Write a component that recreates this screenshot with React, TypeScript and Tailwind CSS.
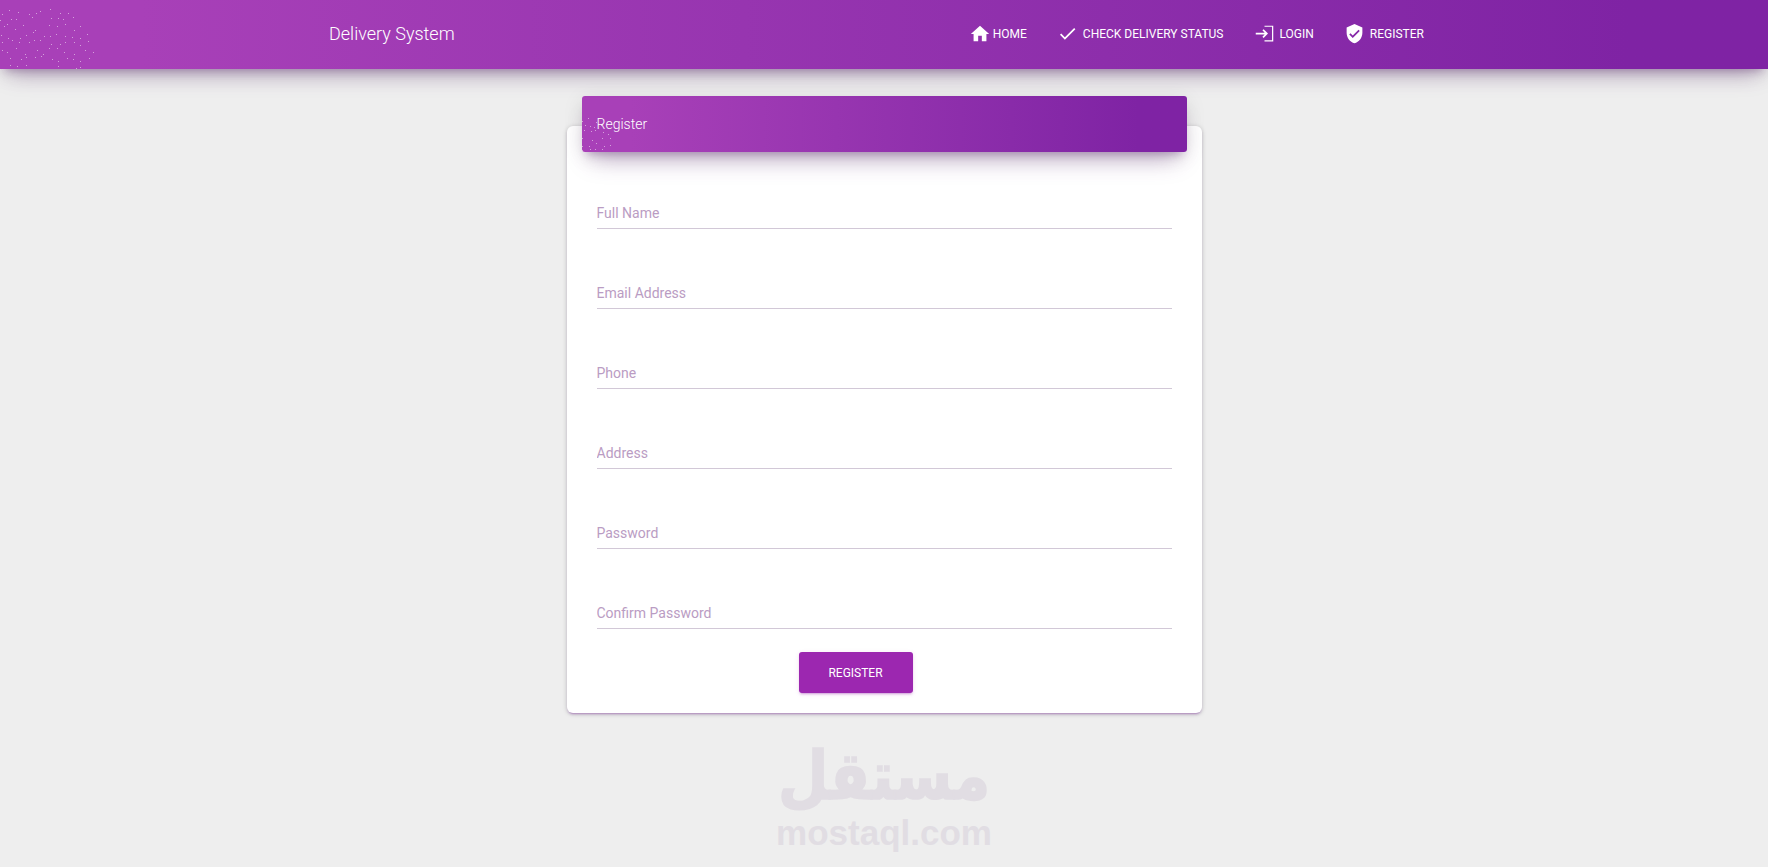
import clsx from "clsx";

const fields = ["Full Name", "Email Address", "Phone", "Address", "Password", "Confirm Password"];

function noise(n: number) {
  const v = Math.sin(n * 12.9898) * 43758.5453;
  return v - Math.floor(v);
}

function makeDots(maxX: number, maxY: number, step: number) {
  // jittered grid, cut to a fan from the bottom left corner
  const dots: { x: number; y: number }[] = [];
  let n = 1;
  for (let y = maxY; y > 3; y -= step) {
    for (let x = 2; x < maxX; x += step) {
      n++;
      const dx = x + (noise(n) - 0.5) * step * 0.8;
      const dy = y + (noise(n + 500) - 0.5) * step * 0.8;
      const rx = dx / maxX;
      const ry = (maxY - dy) / maxY;
      if (rx * rx + ry * ry * 0.7 < 1 && noise(n + 900) > 0.12) dots.push({ x: dx, y: dy });
    }
  }
  return dots;
}

function Dots({ width, height, step }: { width: number; height: number; step: number }) {
  return (
    <svg width={width} height={height} className="absolute left-0 bottom-0">
      {makeDots(width - 2, height - 2, step).map((d, i) => (
        <rect key={i} x={Math.round(d.x)} y={Math.round(d.y)} width="1" height="1" fill="#ffffff" opacity="0.5" />
      ))}
    </svg>
  );
}

function Icon({ d, className }: { d: string; className?: string }) {
  return (
    <svg viewBox="0 0 24 24" fill="currentColor" className={clsx("shrink-0", className)}>
      <path d={d} />
    </svg>
  );
}

const navItems = [
  { name: "Home", gap: "mr-[2px] size-[22px]", d: "M10 20v-6h4v6h5v-8h3L12 3 2 12h3v8z" },
  { name: "Check Delivery Status", gap: "mr-[5px] size-[21px]", d: "M9 16.17 4.83 12l-1.42 1.41L9 19 21 7l-1.41-1.41z" },
  {
    name: "Login",
    gap: "mr-[5px] size-[21px]",
    d: "M11 7 9.6 8.4l2.6 2.6H2v2h10.2l-2.6 2.6L11 17l5-5-5-5zm11-4H12v1.4h8.6v15.2H12V21h10z",
  },
  {
    name: "Register",
    gap: "mr-[5px] size-[21px]",
    d: "M12 1 3 5v6c0 5.55 3.84 10.74 9 12 5.16-1.26 9-6.45 9-12V5l-9-4zm-2 16-4-4 1.41-1.41L10 14.17l6.59-6.59L18 9l-8 8z",
  },
];

export default function App() {
  return (
    <div className="min-h-[867px] overflow-hidden bg-[#eeeeee] font-['Roboto',sans-serif]">
      {/* Navbar */}
      <nav className="relative z-10 flex h-[69px] items-center justify-between bg-gradient-to-r from-[#a840b8] from-[8%] to-[#7f23a4] to-[92%] pb-[2px] pl-[329px] pr-[344px] text-white shadow-[0_14px_22px_-10px_rgba(100,50,120,0.4),0_4px_20px_0_rgba(0,0,0,0.1),0_7px_8px_-5px_rgba(100,50,120,0.3)]">
        <Dots width={100} height={68} step={8} />
        <span className="text-[18px] font-light">Delivery System</span>
        <div className="flex items-center gap-[30px]">
          {navItems.map((item) => (
            <a key={item.name} href="#" className="flex items-center text-[12px] uppercase">
              <Icon d={item.d} className={item.gap} />
              {item.name}
            </a>
          ))}
        </div>
      </nav>

      {/* Register card */}
      <main className="flex flex-col items-center pt-[57px]">
        <div className="w-[635px] rounded-[6px] bg-white px-[30px] pb-[20px] shadow-[0_2px_2px_0_rgba(123,31,162,0.14),0_3px_1px_-2px_rgba(123,31,162,0.2),0_1px_5px_0_rgba(0,0,0,0.2)]">
          <div className="relative -mx-[15px] -mt-[30px] flex h-[56px] items-center overflow-hidden rounded-[3px] bg-gradient-to-r from-[#a840b8] from-[8%] to-[#7f23a4] to-[92%] px-[15px] text-[14px] font-light text-white shadow-[0_16px_24px_-10px_rgba(100,50,120,0.4),0_4px_20px_0_rgba(0,0,0,0.1),0_7px_8px_-5px_rgba(100,50,120,0.3)]">
            <Dots width={32} height={40} step={6} />
            <span className="relative">Register</span>
          </div>

          <form className="flex flex-col gap-[44px] pt-[41px]">
            {fields.map((field) => (
              <input
                key={field}
                placeholder={field}
                className="h-[36px] w-full border-b border-[#d2c8d7] bg-transparent pt-[4px] text-[14px] outline-none placeholder:text-[#ba9cc3]"
              />
            ))}
          </form>

          <div className="pl-[202px] pt-[23px]">
            <button className="h-[41px] w-[114px] rounded-[3px] bg-[#9c27b0] text-[12px] uppercase text-white shadow-[0_2px_2px_0_rgba(156,39,176,0.14),0_3px_1px_-2px_rgba(156,39,176,0.2),0_1px_5px_0_rgba(156,39,176,0.12)]">
              Register
            </button>
          </div>
        </div>

        {/* Watermark */}
        <div className="mt-[32px] flex flex-col items-center text-[#e1dde3]">
          <span
            dir="rtl"
            className="origin-bottom scale-y-115 font-['DejaVu_Sans',sans-serif] text-[58px] font-bold leading-[72px] [-webkit-text-stroke:1.5px_#e1dde3]"
          >
            مستقل
          </span>
          <span className="font-['Liberation_Sans',sans-serif] text-[35px] font-bold leading-[32px]">mostaql.com</span>
        </div>
      </main>
    </div>
  );
}
